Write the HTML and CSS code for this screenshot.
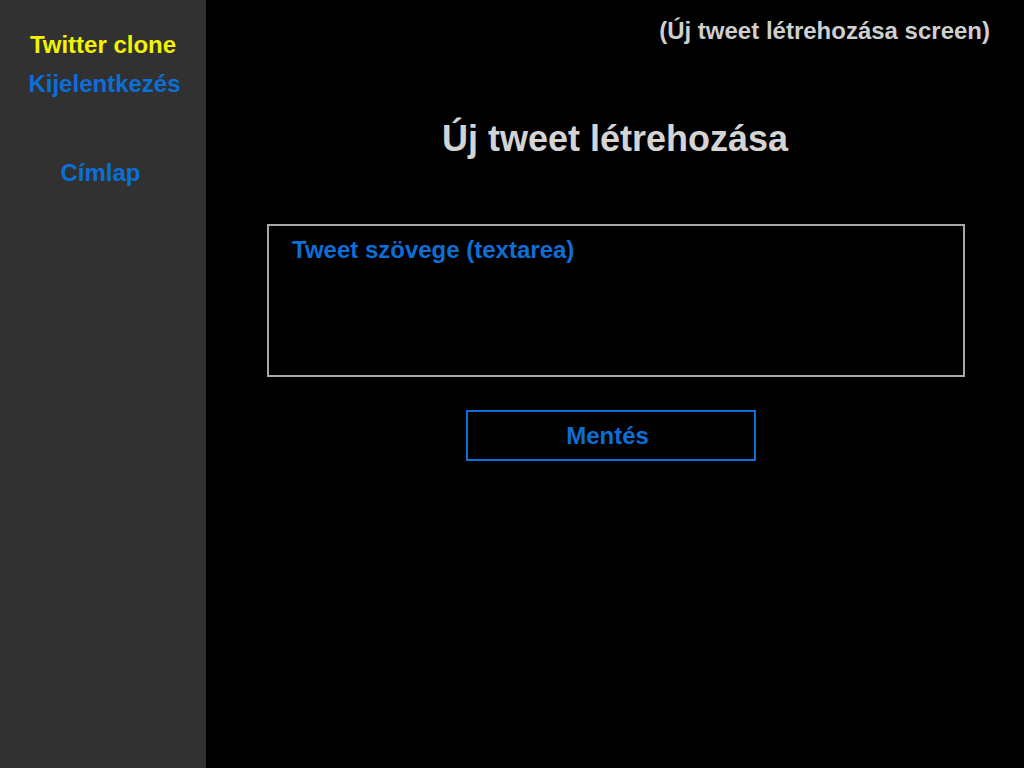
FILE: index.html
```html
<!DOCTYPE html>
<html lang="hu">
<head>
<meta charset="utf-8">
<title>Új tweet létrehozása</title>
<link rel="stylesheet" href="styles.css">
</head>
<body>
<div class="app">
  <nav class="sidebar">
    <div class="brand">Twitter clone</div>
    <a class="nav-link logout" href="#">Kijelentkezés</a>
    <a class="nav-link home" href="#">Címlap</a>
  </nav>
  <main class="main">
    <div class="screen-label">(Új tweet létrehozása screen)</div>
    <h1 class="title">Új tweet létrehozása</h1>
    <div class="textarea-box">Tweet szövege (textarea)</div>
    <div class="save-btn">Mentés</div>
  </main>
</div>
</body>
</html>
```
FILE: styles.css
```css
html, body {
  margin: 0;
  padding: 0;
  background: #000;
}
body {
  font-family: "Liberation Sans", Arial, sans-serif;
  font-weight: bold;
  font-size: 24px;
  line-height: 28px;
}
.app {
  display: flex;
  width: 1024px;
  height: 768px;
}
.sidebar {
  width: 206px;
  flex: none;
  background: #313131;
  display: flex;
  flex-direction: column;
  align-items: center;
  padding-top: 31px;
  box-sizing: border-box;
}
.brand {
  color: #f4f400;
}
.nav-link {
  color: #0c6fd8;
  text-decoration: none;
}
.logout {
  margin-top: 11px;
  margin-left: 3px;
}
.home {
  margin-top: 61px;
  margin-right: 5px;
}
.main {
  flex: 1;
  padding-top: 17px;
  display: flex;
  flex-direction: column;
}
.screen-label {
  color: #cfcfcf;
  text-align: right;
  padding-right: 34px;
}
.title {
  margin: 73px 0 0;
  font-size: 36px;
  line-height: 42px;
  color: #d4d4d4;
  text-align: center;
}
.textarea-box {
  margin: 64px 59px 0 61px;
  height: 153px;
  box-sizing: border-box;
  border: 2px solid #a9a9a9;
  padding: 10px 23px;
  color: #0c6fd8;
}
.save-btn {
  margin: 33px 0 0 260px;
  width: 290px;
  height: 51px;
  box-sizing: border-box;
  border: 2px solid #0c6fd8;
  color: #0c6fd8;
  display: flex;
  align-items: center;
  justify-content: center;
  padding-right: 7px;
}
```
